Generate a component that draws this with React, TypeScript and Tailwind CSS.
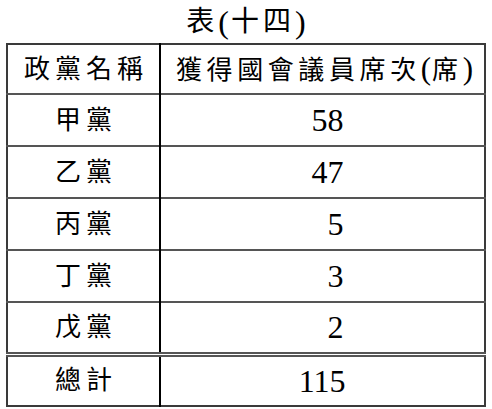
const rows = [
  { name: "甲黨", seats: "58" },
  { name: "乙黨", seats: "47" },
  { name: "丙黨", seats: "5" },
  { name: "丁黨", seats: "3" },
  { name: "戊黨", seats: "2" },
];

const cjk = { fontFamily: '"Liberation Serif", "Noto Sans CJK TC", serif' };

export default function App() {
  return (
    <div className="w-[492px] h-[409px] bg-white text-black" style={cjk}>
      <div className="h-[43px] flex items-center justify-center pt-[1px] pl-[4px] text-[28px] tracking-[4px] leading-none">
        表<span className="text-[32px] tracking-[2px]">(</span>十四<span className="text-[32px]">)</span>
      </div>
      <table className="ml-[6px] w-[480px] border-collapse border-2 border-[#3a3a3a] table-fixed">
        <colgroup>
          <col className="w-[153px]" />
          <col />
        </colgroup>
        <thead>
          <tr className="h-[50px]">
            <th className="font-normal text-[26px] tracking-[5px] pl-[5px] border-r-2 border-black">
              政黨名稱
            </th>
            <th className="font-normal text-[26px] tracking-[4.6px] pl-[4px] whitespace-nowrap">
              獲得國會議員席次<span className="text-[31px] tracking-[1px]">(</span>席<span className="text-[31px] tracking-normal">)</span>
            </th>
          </tr>
        </thead>
        <tbody>
          {rows.map((r) => (
            <tr key={r.name} className="h-[52px] border-t-2 border-[#555]">
              <td className="text-center text-[26px] tracking-[5px] pl-[5px] border-r-2 border-black">
                {r.name}
              </td>
              <td className="text-center text-[32px] leading-none">
                <span className="inline-block w-[60px] text-right pr-[9px]">{r.seats}</span>
              </td>
            </tr>
          ))}
          <tr className="h-[52px] border-t-[5px] border-double border-[#555]">
            <td className="text-center text-[26px] tracking-[5px] pl-[5px] border-r-2 border-black">
              總計
            </td>
            <td className="text-center text-[32px] leading-none">
              <span className="inline-block w-[60px] text-right pr-[7px]">115</span>
            </td>
          </tr>
        </tbody>
      </table>
    </div>
  );
}
